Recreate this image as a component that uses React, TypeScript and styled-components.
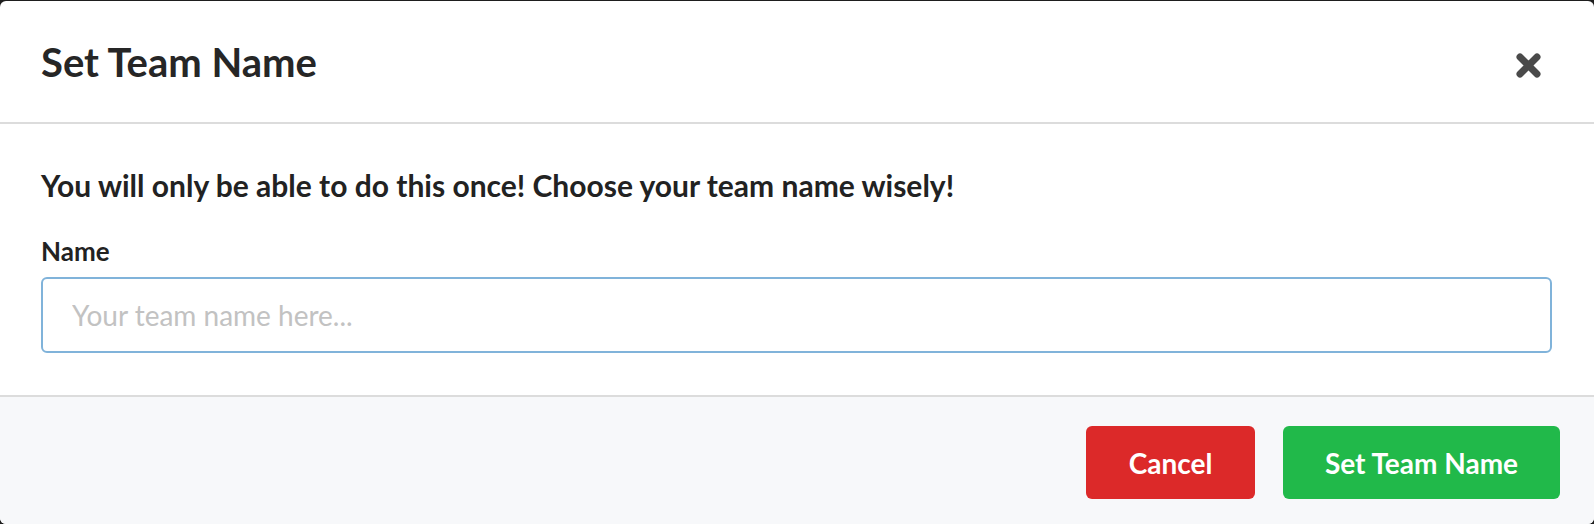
import React from "react";
import styled, { createGlobalStyle } from "styled-components";

const Global = createGlobalStyle`
  html, body { margin: 0; padding: 0; background: #1e1e1e; }
  body { font-family: Lato, "Open Sans", sans-serif; }
  * { box-sizing: border-box; }
`;

const Modal = styled.div`
  margin-top: 1px;
  width: 1594px;
  height: 523px;
  background: #fff;
  border-radius: 6px;
  overflow: hidden;
  display: flex;
  flex-direction: column;
`;

const Header = styled.div`
  height: 123px;
  flex: none;
  display: flex;
  align-items: center;
  justify-content: space-between;
  padding: 0 52px 0 41px;
  border-bottom: 2px solid #dcdcdc;
`;

const Title = styled.h1`
  margin: 0;
  font-family: Lato, sans-serif;
  font-weight: 700;
  font-size: 40px;
  line-height: 48px;
  color: #262626;
`;

const Close = styled.button`
  border: 0;
  background: none;
  padding: 0;
  margin-top: 7px;
  width: 27px;
  height: 27px;
  display: flex;
  align-items: center;
  justify-content: center;
  cursor: pointer;
`;

const Body = styled.div`
  flex: none;
  height: 273px;
  padding: 43px 42px 0 41px;
  border-bottom: 2px solid #dcdcdc;
`;

const Lead = styled.p`
  margin: 0 0 33px;
  font-weight: 700;
  font-size: 30px;
  line-height: 36px;
  color: #222;
`;

const Label = styled.label`
  display: block;
  font-weight: 700;
  font-size: 26px;
  line-height: 30px;
  color: #222;
  margin-bottom: 11px;
`;

const Input = styled.input`
  display: block;
  width: 100%;
  height: 76px;
  border: 2px solid #80b3da;
  border-radius: 6px;
  padding: 0 29px;
  font-family: Lato, sans-serif;
  font-size: 28px;
  color: #222;
  caret-color: #000;
  outline: none;
  &::placeholder { color: #c2c2c2; }
`;

const Footer = styled.div`
  flex: 1;
  background: #f7f8fa;
  display: flex;
  justify-content: flex-end;
  align-items: flex-start;
  gap: 28px;
  padding: 29px 34px 0 0;
`;

const Button = styled.button<{ $tone: "danger" | "success"; $w: number }>`
  width: ${(p) => p.$w}px;
  height: 73px;
  border: 0;
  border-radius: 6px;
  background: ${(p) => (p.$tone === "danger" ? "#dc2929" : "#21b94a")};
  color: #fff;
  font-family: Lato, sans-serif;
  font-weight: 700;
  font-size: 28px;
  cursor: pointer;
`;

export default function App() {
  return (
    <>
      <Global />
      <Modal>
        <Header>
          <Title>Set Team Name</Title>
          <Close aria-label="Close">
            <svg width="27" height="27" viewBox="0 0 27 27">
              <path d="M5 5 L22 22 M22 5 L5 22" stroke="#4a4a4a" strokeWidth="7" strokeLinecap="round" />
            </svg>
          </Close>
        </Header>
        <Body>
          <Lead>You will only be able to do this once! Choose your team name wisely!</Lead>
          <Label htmlFor="team">Name</Label>
          <Input id="team" placeholder="Your team name here..." autoFocus />
        </Body>
        <Footer>
          <Button $tone="danger" $w={169}>Cancel</Button>
          <Button $tone="success" $w={277}>Set Team Name</Button>
        </Footer>
      </Modal>
    </>
  );
}
